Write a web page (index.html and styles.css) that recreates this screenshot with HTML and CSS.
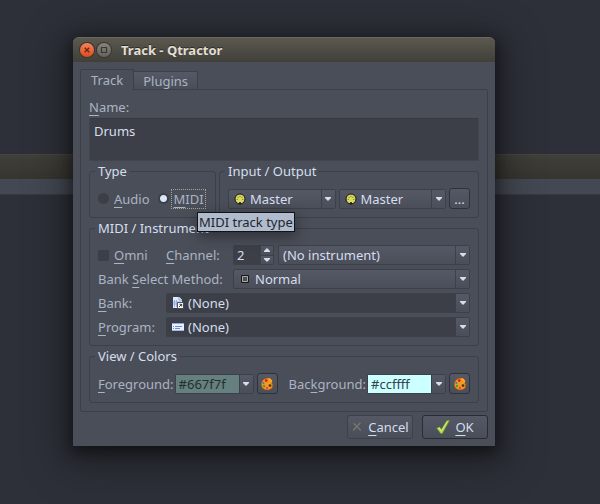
FILE: index.html
```html
<!DOCTYPE html>
<html lang="en">
<head>
<meta charset="utf-8">
<title>Track - Qtractor</title>
<link rel="stylesheet" href="styles.css">
</head>
<body>
<svg class="defs" aria-hidden="true">
  <symbol id="down" viewBox="0 0 6 4"><path d="M0 0h6v1L3 4 0 1z" fill="currentColor"/></symbol>
  <symbol id="up" viewBox="0 0 6 4"><path d="M0 4h6V3L3 0 0 3z" fill="currentColor"/></symbol>
  <symbol id="midi" viewBox="0 0 12 12">
    <circle cx="6" cy="6" r="5" fill="#d9da5e" stroke="#15161a" stroke-width="1"/>
    <path d="M2.700 6.500h1M3.600 4.300h1M5.500 3.300h1M7.400 4.300h1M8.300 6.500h1" stroke="#6c6c2a" stroke-width="1"/>
    <path d="M5 11V9.200h2V11z" fill="#15161a"/>
  </symbol>
  <symbol id="palette" viewBox="0 0 14 14">
    <path d="M8 1C4 1 1.3 4 1.3 7.5c0 3.200 2.500 5.500 5.700 5.500 3 0 5.800-1.800 5.800-4.600 0-1.300-.5-1.500-.9-2.200C12.600 5 12.300 1 8 1z" fill="#f39a1f" stroke="#a3510c" stroke-width=".7"/>
    <path d="M8.500 1.800c2 0 3 1.200 2.800 3" fill="none" stroke="#ffc65a" stroke-width="1"/>
    <circle cx="6.200" cy="3.600" r="1.400" fill="#d91c14"/>
    <circle cx="3.400" cy="6" r="1.100" fill="#2e7bd4"/>
    <circle cx="4" cy="9" r="1.200" fill="#37a52c"/>
    <circle cx="7" cy="10.900" r="1.100" fill="#d833a4"/>
    <circle cx="10" cy="8.600" r="1.400" fill="#5c3010"/>
  </symbol>
</svg>
<div class="desktop">
  <div class="backdrop"><div class="back-title"></div><div class="back-bar"></div></div>
  <main class="stage">
    <div class="dialog">
      <header class="titlebar">
        <button class="round close" aria-label="Close"><svg viewBox="0 0 14 14"><path d="M4.700 4.700l4.600 4.600M9.300 4.700L4.700 9.300" stroke="#6b2410" stroke-width="1.300"/></svg></button>
        <button class="round max" aria-label="Maximize"><svg viewBox="0 0 14 14"><path d="M4.500 4.500h5v5h-5z" fill="none" stroke="#3a3934" stroke-width="1.200"/></svg></button>
        <h1>Track - Qtractor</h1>
      </header>
      <div class="tabs">
        <button class="tab active">Track</button><button class="tab">Plugins</button>
      </div>
      <div class="panel">
        <label class="name-label" for="name"><u>N</u>ame:</label>
        <textarea id="name" class="name">Drums</textarea>
        <div class="pair">
          <fieldset class="type">
            <legend>Type</legend>
            <div class="row">
              <input type="radio" name="type" id="audio"><label for="audio"><u>A</u>udio</label>
              <input type="radio" name="type" id="midi-type" checked><label class="focused" for="midi-type"><u>M</u>IDI</label>
            </div>
            <div class="tooltip" role="tooltip">MIDI track type</div>
          </fieldset>
          <fieldset class="io">
            <legend>Input / Output</legend>
            <div class="row">
              <div class="combo grow"><svg class="ico"><use href="#midi"/></svg><select aria-label="Input bus"><option>Master</option></select><span class="arrow"><svg><use href="#down"/></svg></span></div>
              <div class="combo grow"><svg class="ico"><use href="#midi"/></svg><select aria-label="Output bus"><option>Master</option></select><span class="arrow"><svg><use href="#down"/></svg></span></div>
              <button class="tool">...</button>
            </div>
          </fieldset>
        </div>
        <fieldset>
          <legend>MIDI / Instrument</legend>
          <div class="midi-grid">
            <div class="omni"><input type="checkbox" id="omni"><label for="omni"><u>O</u>mni</label></div>
            <label for="channel"><u>C</u>hannel:</label>
            <div class="channel">
              <div class="spin"><input type="text" id="channel" value="2"><span class="steps"><button aria-label="Increase"><svg><use href="#up"/></svg></button><button aria-label="Decrease"><svg><use href="#down"/></svg></button></span></div>
              <div class="combo grow"><select aria-label="Instrument"><option>(No instrument)</option></select><span class="arrow"><svg><use href="#down"/></svg></span></div>
            </div>
            <label class="method-label" for="method">Bank <u>S</u>elect Method:</label>
            <div class="combo"><svg class="ico" viewBox="0 0 12 12"><path d="M3.500 3.500h5v5h-5z" fill="#4c4e50" stroke="#a9aaa0"/><path d="M2.500 2.500h7v7h-7z" fill="none" stroke="#17181b"/></svg><select id="method"><option>Normal</option></select><span class="arrow"><svg><use href="#down"/></svg></span></div>
            <label for="bank"><u>B</u>ank:</label>
            <div class="combo dark"><svg class="ico" viewBox="0 0 12 12"><path d="M1 0h6l3 3v8H1z" fill="#dfe9fb"/><path d="M7 0v3h3" fill="#f8fbff" stroke="#6f88bd" stroke-width=".7"/><path d="M2.500 3v7M4.500 3v7M1 5h8M1 7h5" stroke="#8fabe8" stroke-width=".9"/><path d="M5.500 5.500h6v6h-6z" fill="#fff" stroke="#30353f" stroke-width=".8"/><path d="M7 10l2.500-2.500M7.500 7.300h2.200v2.200" stroke="#222" fill="none" stroke-width=".9"/></svg><select id="bank"><option>(None)</option></select><span class="arrow"><svg><use href="#down"/></svg></span></div>
            <label for="program"><u>P</u>rogram:</label>
            <div class="combo dark"><svg class="ico" viewBox="0 0 12 12"><path d="M0 2h12v8H0z" fill="#e8f0ff"/><path d="M0 2h12v1H0z" fill="#86a9ee"/><path d="M1 5.500h1M3 5.500h7M1 7.500h1M3 7.500h5" stroke="#6c8ccc"/><path d="M0 9.500h12" stroke="#9eb7e8"/></svg><select id="program"><option>(None)</option></select><span class="arrow"><svg><use href="#down"/></svg></span></div>
          </div>
        </fieldset>
        <fieldset>
          <legend>View / Colors</legend>
          <div class="row colors">
            <div class="color"><label for="fg"><u>F</u>oreground:</label>
              <div class="combo hue"><input type="text" id="fg" class="fg" value="#667f7f"><button class="arrow" aria-label="Foreground presets"><svg><use href="#down"/></svg></button></div>
              <button class="tool" aria-label="Choose foreground"><svg><use href="#palette"/></svg></button></div>
            <div class="color"><label for="bg">Bac<u>k</u>ground:</label>
              <div class="combo hue"><input type="text" id="bg" class="bg" value="#ccffff"><button class="arrow" aria-label="Background presets"><svg><use href="#down"/></svg></button></div>
              <button class="tool" aria-label="Choose background"><svg><use href="#palette"/></svg></button></div>
          </div>
        </fieldset>
      </div>
      <footer class="actions">
        <button class="action"><svg viewBox="0 0 14 14"><path d="M3 2.500l8.500 8.500M11 2L2.500 11" stroke="#77776c" stroke-width="1.700"/></svg><span><u>C</u>ancel</span></button>
        <button class="action ok"><svg viewBox="0 0 14 14"><path d="M.8 8.300l2.900-1.400 1.700 2.600L10.800.7l2.700-.4L6.300 13.500H4.700z" fill="#b4dc4b" stroke="#73982a" stroke-width=".7"/><path d="M2 8.600l1.400-.6 1.900 3L11.300 1.500" fill="none" stroke="#e0f48e" stroke-width=".8"/></svg><span><u>O</u>K</span></button>
      </footer>
    </div>
  </main>
</div>
</body>
</html>
```
FILE: styles.css
```css
* { box-sizing: border-box; }
:root {
  --face: #4a4e58;
  --line: #3c4049;
  --well: #3c3f47;
  --dim: #abb4c4;
  --text: #d5deee;
  --raised: linear-gradient(#555965, #4a4e59);
}
body { margin: 0; background: #2d3038; color: var(--dim); font: 13px/16px "Noto Sans", sans-serif; }
button, select, input, textarea { font: inherit; color: var(--text); margin: 0; padding: 0; border: 0; background: none; outline: 0; }
u { text-decoration: underline; text-decoration-thickness: 1px; text-underline-offset: 3px; }
.defs { position: absolute; width: 0; height: 0; }
.desktop { display: grid; min-height: 100vh; overflow: hidden; }
.backdrop, .stage { grid-area: 1 / 1; min-width: 0; }
.backdrop { padding-top: 154px; }
.back-title { height: 25px; background: linear-gradient(#403f39, #36352f); border-top: 1px solid #47463e; }
.back-bar { height: 16px; background: #444852; border-bottom: 1px solid #363a42; }
.stage { padding: 37px 105px 58px 73px; }
.dialog { position: relative; background: var(--face); border-radius: 6px 6px 0 0; padding-bottom: 7px; box-shadow: 0 5px 16px 2px rgba(0,0,0,.5), 0 8px 42px 12px rgba(0,0,0,.28); }

.titlebar { height: 25px; display: flex; align-items: center; gap: 3px; padding-left: 7px; border-radius: 6px 6px 0 0; background: linear-gradient(#5b594f, #403f39); border-top: 1px solid #6a685e; }
.titlebar h1 { margin: 0 0 0 7px; font-size: 13px; font-weight: 700; color: #e2ded2; text-shadow: 0 -1px #2b2a26; }
.round { width: 14px; height: 14px; border-radius: 7px; box-shadow: 0 0 0 1px #37352f; }
.round svg { display: block; width: 14px; height: 14px; }
.close { background: linear-gradient(#f4845c, #df4a1c); }
.max { background: linear-gradient(#85837a, #64625a); }

.tabs { display: flex; align-items: flex-end; height: 27px; padding: 0 7px; }
.tab { height: 18px; padding: 0 9px; color: var(--dim); background: var(--raised); border: 1px solid var(--line); border-width: 1px 1px 0 0; border-radius: 0 2px 0 0; }
.tab.active { position: relative; height: 21px; margin-bottom: -1px; padding: 0 10px; background: var(--face); border-width: 1px 1px 0 1px; border-radius: 2px 2px 0 0; }
.panel { margin: 0 7px; padding: 9px 8px 8px; border: 1px solid var(--line); border-radius: 0 2px 2px 2px; display: flex; flex-direction: column; gap: 2px; }
.name-label { line-height: 17px; }
.name { display: block; width: 100%; height: 43px; padding: 4px; background: var(--well); border: 1px solid #42454e; border-top-color: #363941; border-radius: 2px; resize: none; line-height: 16px; }

fieldset { min-width: 0; margin: 0; padding: 9px 8px 8px; border: 1px solid var(--line); border-radius: 3px; }
legend { margin-left: -3px; padding: 0 3px; color: var(--text); }
.pair { display: grid; grid-template-columns: 127fr 260fr; gap: 3px; }
.type { position: relative; }
.row { display: flex; align-items: center; gap: 3px; height: 21px; }
.type .row { gap: 0; }
.type label { margin-left: 5px; }
.type .focused { margin-left: 3px; padding: 1px 1px 1px 2px; outline: 1px dotted #a5a296; }
input[type=radio] { appearance: none; width: 11px; height: 11px; border-radius: 6px; background: var(--well); flex: none; }
label + input[type=radio] { margin-left: 8px; }
input[type=radio]:checked { background: radial-gradient(circle, #dce6f7 3px, #3c3f47 4px); }
input[type=checkbox] { appearance: none; width: 11px; height: 11px; background: var(--well); border-radius: 1px; }
.tooltip { position: absolute; left: 107px; top: 33px; z-index: 2; padding: 1px 1px; white-space: nowrap; color: #22252c; background: #b0bccd; border: 1px solid #111317; box-shadow: 1px 4px 14px rgba(0,0,0,.4); }

.combo { display: flex; align-items: center; min-width: 0; height: 20px; background: var(--raised); border: 1px solid var(--line); border-radius: 2px; }
.grow { flex: 1 1 0; }
.combo select { flex: 1; min-width: 0; height: 18px; padding-left: 4px; appearance: none; }
.ico { width: 12px; height: 12px; margin-left: 5px; flex: none; }
.arrow { display: flex; align-items: center; justify-content: center; width: 14px; height: 18px; flex: none; border-left: 1px solid var(--line); color: var(--text); background: var(--raised); }
.arrow svg, .steps svg { display: block; width: 6px; height: 4px; }
.dark { background: var(--well); }
.tool { display: flex; align-items: center; justify-content: center; width: 21px; height: 21px; flex: none; background: var(--raised); border: 1px solid #2f323a; border-radius: 3px; }
.tool svg { width: 14px; height: 14px; }

.midi-grid { display: grid; grid-template-columns: 68px 67px 1fr; row-gap: 4px; align-items: center; grid-auto-rows: 20px; }
.omni { display: flex; align-items: center; gap: 5px; }
.channel { display: flex; gap: 4px; }
.method-label { grid-column: span 2; white-space: nowrap; }
.dark { grid-column: 2 / -1; }
.spin { display: flex; width: 41px; height: 20px; border: 1px solid var(--line); border-radius: 2px; background: var(--well); }
.spin input { flex: 1; min-width: 0; padding-left: 3px; }
.steps { display: flex; flex-direction: column; width: 13px; border-left: 1px solid var(--line); }
.steps button { flex: 1; display: flex; align-items: center; justify-content: center; background: var(--raised); }
.steps button + button { border-top: 1px solid var(--line); }

.colors { justify-content: space-between; }
.color { display: flex; align-items: center; gap: 3px; }
.color label { margin-right: -2px; }
.hue input { width: 63px; height: 18px; padding-left: 3px; color: #32444a; }
.hue .fg { background: #667f7f; color: #22302f; }
.hue .bg { background: #ccffff; }

.actions { display: flex; justify-content: flex-end; gap: 9px; padding: 3px 7px 0; }
.action { display: flex; align-items: center; justify-content: center; gap: 5px; width: 66px; height: 24px; background: var(--raised); border: 1px solid var(--line); border-radius: 3px; }
.action svg { width: 14px; height: 14px; }
.action:not(.ok) svg { width: 12px; height: 12px; }
.ok { border-color: #292c33; }
```
